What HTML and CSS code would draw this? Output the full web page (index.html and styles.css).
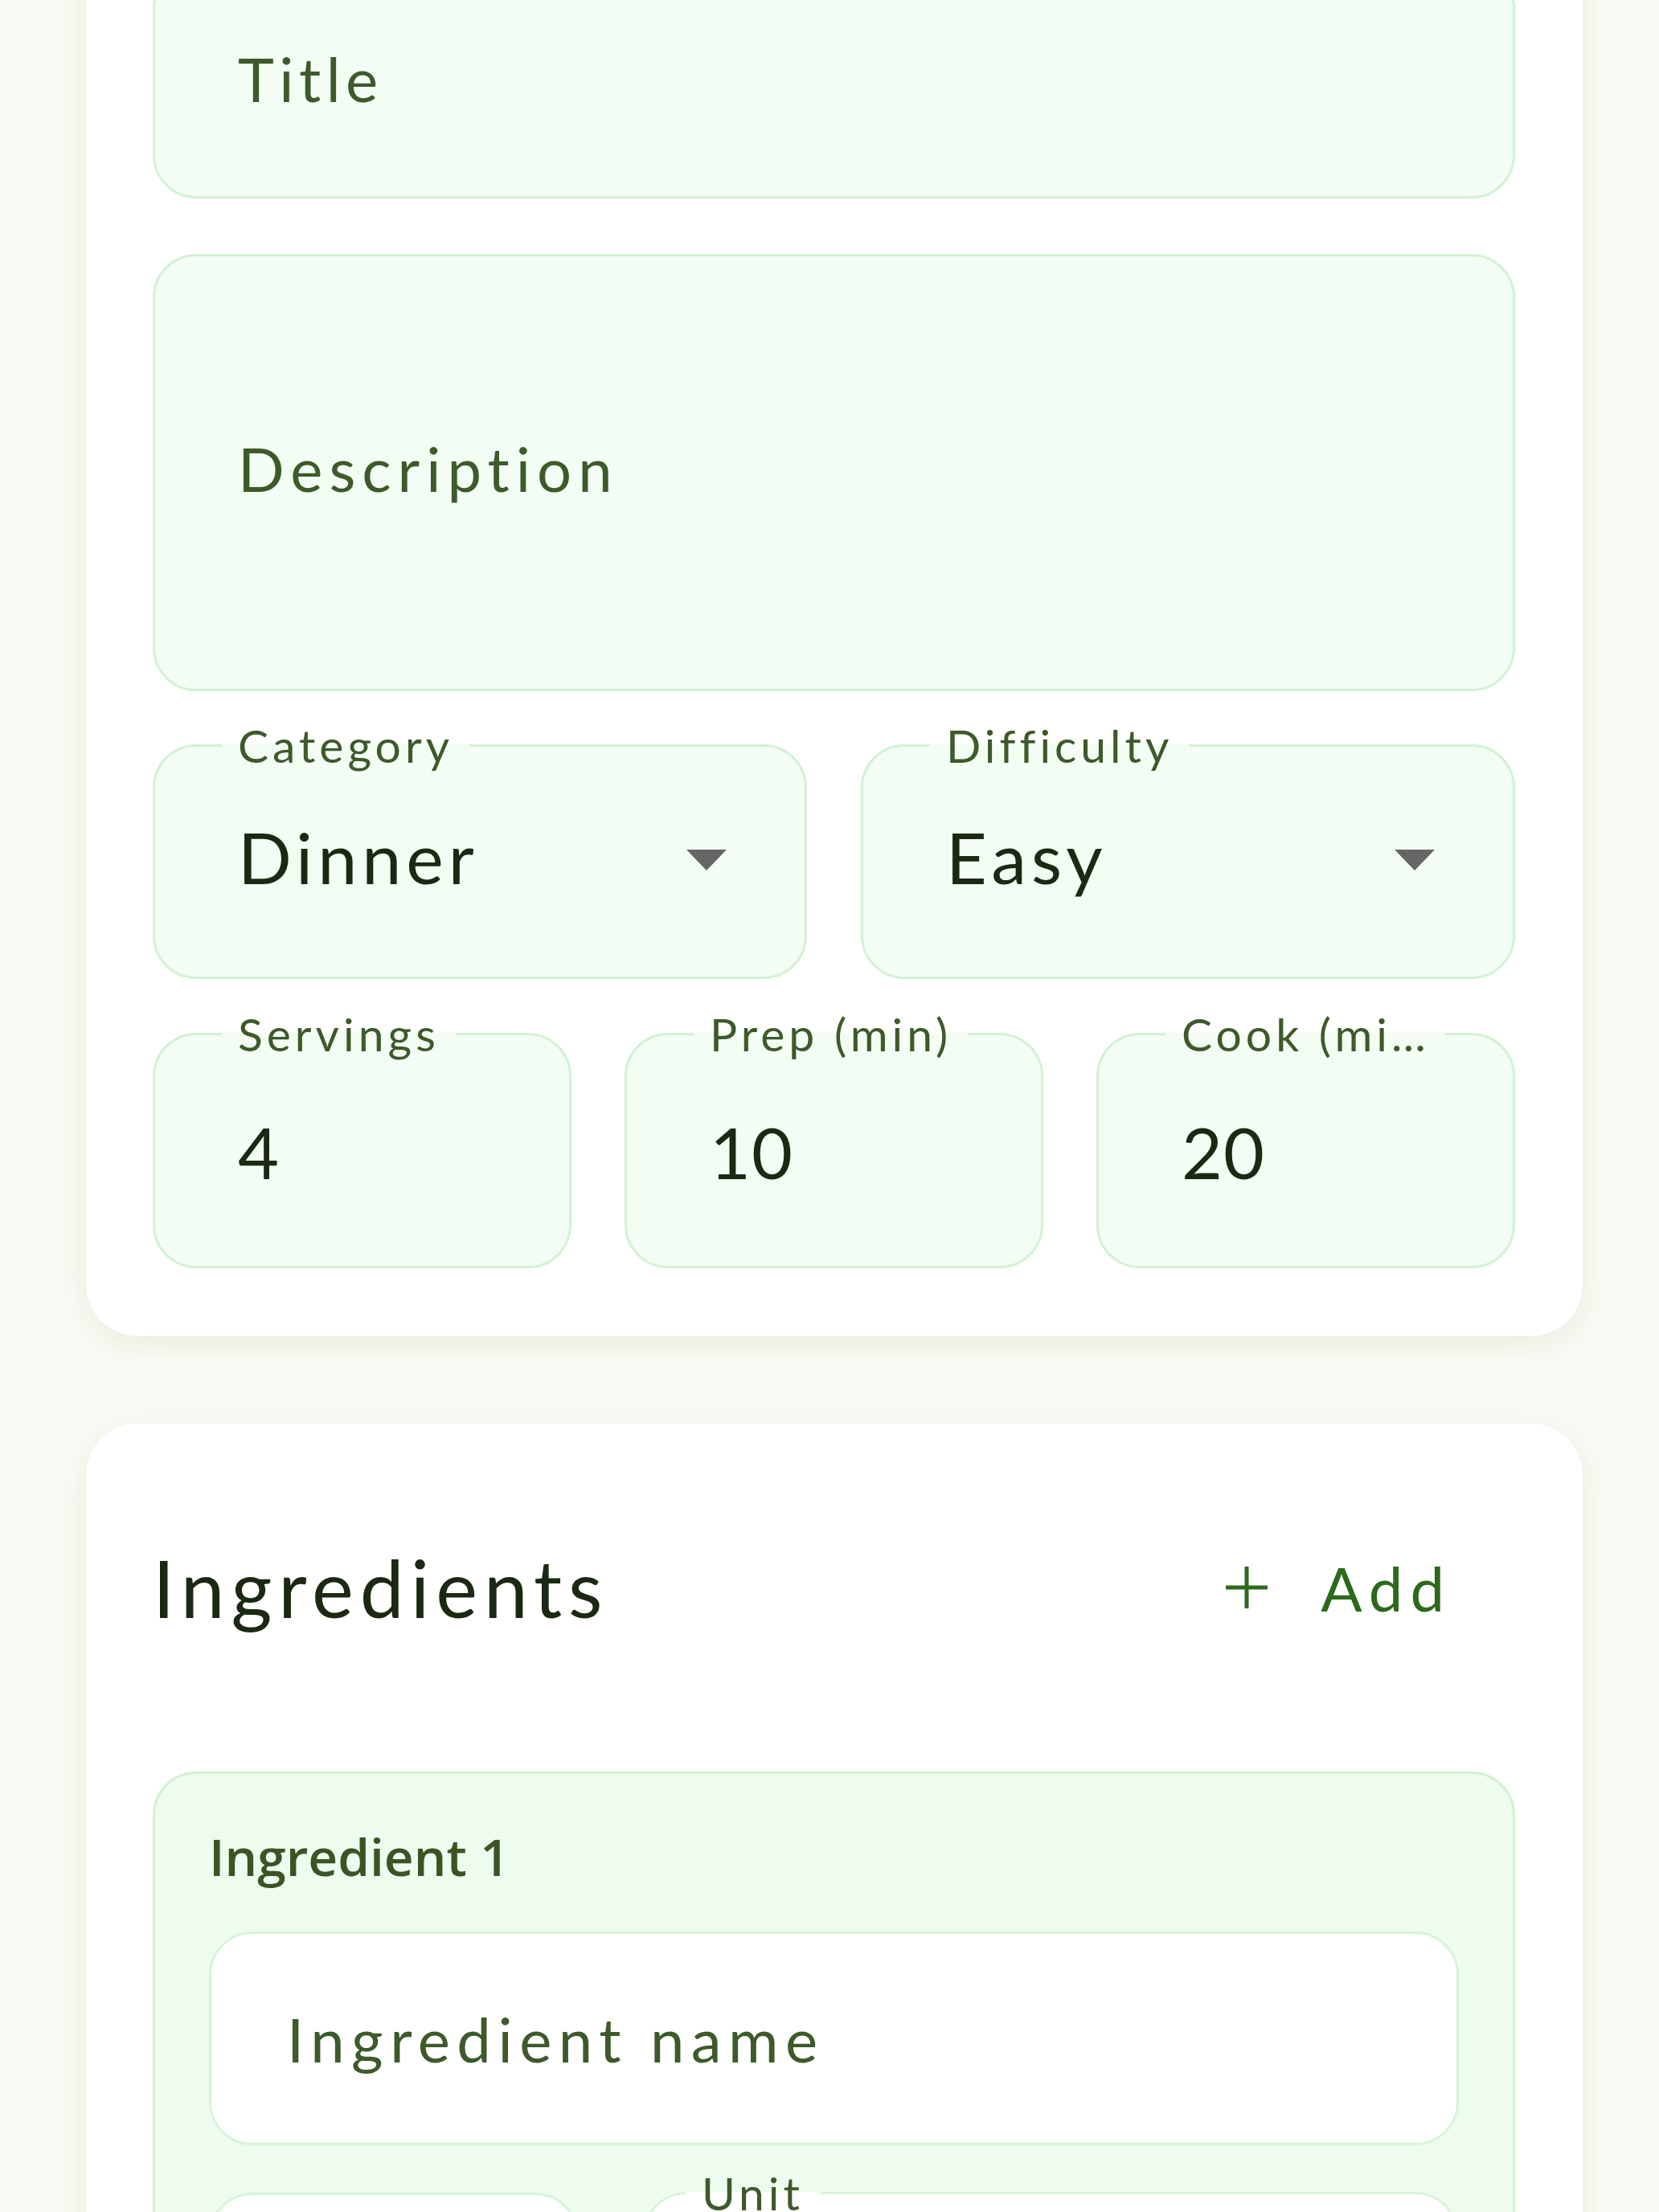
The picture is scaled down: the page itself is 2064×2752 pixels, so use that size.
FILE: index.html
```html
<!DOCTYPE html>
<html>
	<head>
		<meta charset="utf-8">
		<title>New recipe</title>
		<link rel="stylesheet" href="styles.css">
	</head>
	<body>
		<main class="page">
			<section class="card details">
				<div class="field title">Title</div>
				<div class="field desc">Description</div>
				<div class="row two">
					<fieldset class="outlined select">
						<legend>Category</legend>
						<div class="value-row top"><span class="value">Dinner</span><span class="caret"></span></div>
					</fieldset>
					<fieldset class="outlined select">
						<legend>Difficulty</legend>
						<div class="value-row top"><span class="value">Easy</span><span class="caret"></span></div>
					</fieldset>
				</div>
				<div class="row three">
					<fieldset class="outlined">
						<legend>Servings</legend>
						<div class="value-row num"><span class="value digits">4</span></div>
					</fieldset>
					<fieldset class="outlined">
						<legend>Prep (min)</legend>
						<div class="value-row num"><span class="value digits">10</span></div>
					</fieldset>
					<fieldset class="outlined">
						<legend>Cook (min)</legend>
						<div class="value-row num"><span class="value digits">20</span></div>
					</fieldset>
				</div>
			</section>

			<section class="card ingredients">
				<div class="card-head">
					<h2>Ingredients</h2>
					<button class="add-btn">
						<svg width="56" height="56" viewBox="0 0 56 56"><path d="M28 2v52M2 28h52" stroke="currentColor" stroke-width="5" fill="none"/></svg>
						<span>Add</span>
					</button>
				</div>
				<div class="ingredient">
					<div class="ingredient-title">Ingredient 1</div>
					<div class="field white name">Ingredient name</div>
					<div class="ingredient-row">
						<div class="field white qty"></div>
						<fieldset class="outlined white unit">
							<legend>Unit</legend>
							<div class="value-row num"></div>
						</fieldset>
					</div>
				</div>
			</section>
		</main>
	</body>
</html>
```

FILE: styles.css
```css
body
{
	margin:0;
	background:#fafbf4;
	font-family:"Lato", "Noto Sans", sans-serif;
	overflow:hidden;
}
.page
{
	width:1862px;
	margin-left:107px;
}
.card
{
	background:#ffffff;
	border-radius:64px;
	box-shadow:0 10px 44px rgba(70,90,50,0.09);
	padding:84px 84px 84px 83px;
}
.details
{
	margin-top:-128px;
	display:flex;
	flex-direction:column;
}
.field
{
	box-sizing:border-box;
	display:flex;
	align-items:center;
	background:#f3fdf3;
	border:3px solid #d2f2d3;
	border-radius:54px;
	padding-left:103px;
	font-size:76px;
	letter-spacing:7.5px;
	color:#3d5a2a;
}
.title
{
	height:291px;
	margin-bottom:69px;
	padding-bottom:8px;
	letter-spacing:6.5px;
}
.desc
{
	height:544px;
	margin-bottom:32px;
	padding-bottom:12px;
	letter-spacing:8px;
}
.row
{
	display:grid;
	column-gap:67px;
}
.two
{
	grid-template-columns:1fr 1fr;
	margin-bottom:33px;
}
.three
{
	grid-template-columns:1fr 1fr 1fr;
	column-gap:66px;
}
.outlined
{
	margin:0;
	min-width:0;
	padding:0 97px 0 103px;
	background:#f3fdf3;
	border:3px solid #d2f2d3;
	border-radius:54px;
}
.outlined legend
{
	margin-left:-20px;
	padding:0 20px;
	font-size:57px;
	line-height:70px;
	letter-spacing:5px;
	color:#3d5a2a;
	max-width:308px;
	white-space:nowrap;
	overflow:hidden;
	text-overflow:ellipsis;
}
.value-row
{
	display:flex;
	align-items:center;
	justify-content:space-between;
}
.value-row.top
{
	height:208px;
	padding-bottom:45px;
}
.value-row.num
{
	height:224px;
	padding-bottom:30px;
}
.value
{
	font-size:88px;
	letter-spacing:6px;
	color:#1b2913;
}
.value.digits
{
	letter-spacing:1px;
}
.caret
{
	width:0;
	height:0;
	border-left:25px solid transparent;
	border-right:25px solid transparent;
	border-top:26px solid #666666;
	margin-top:8px;
}
.ingredients
{
	margin-top:109px;
}
.card-head
{
	height:240px;
	display:flex;
	align-items:center;
	justify-content:space-between;
	margin-bottom:109px;
}
h2
{
	margin:0;
	font-size:98px;
	font-weight:400;
	letter-spacing:8px;
	color:#1b2913;
}
.add-btn
{
	display:flex;
	align-items:center;
	gap:64px;
	margin-right:79px;
	padding:0;
	border:none;
	background:none;
	font-family:inherit;
	font-size:76px;
	letter-spacing:9px;
	color:#2b6a1c;
}
.add-btn svg
{
	display:block;
}
.ingredient
{
	background:#edfcee;
	border:3px solid #d0f1d0;
	border-radius:54px;
	padding:61px 67px 0 67px;
	height:700px;
}
.ingredient-title
{
	font-family:"Open Sans", sans-serif;
	font-weight:600;
	font-size:64px;
	line-height:84px;
	color:#3a5524;
	margin-bottom:51px;
}
.white
{
	background:#ffffff;
	border-color:#d8f4d8;
}
.name
{
	height:266px;
	padding-left:94px;
	margin-bottom:24px;
	letter-spacing:8.5px;
}
.ingredient-row
{
	display:grid;
	grid-template-columns:460px 1fr;
	column-gap:80px;
}
.qty
{
	margin-top:35px;
	height:291px;
}
.unit
{
	padding-left:70px;
}
```
